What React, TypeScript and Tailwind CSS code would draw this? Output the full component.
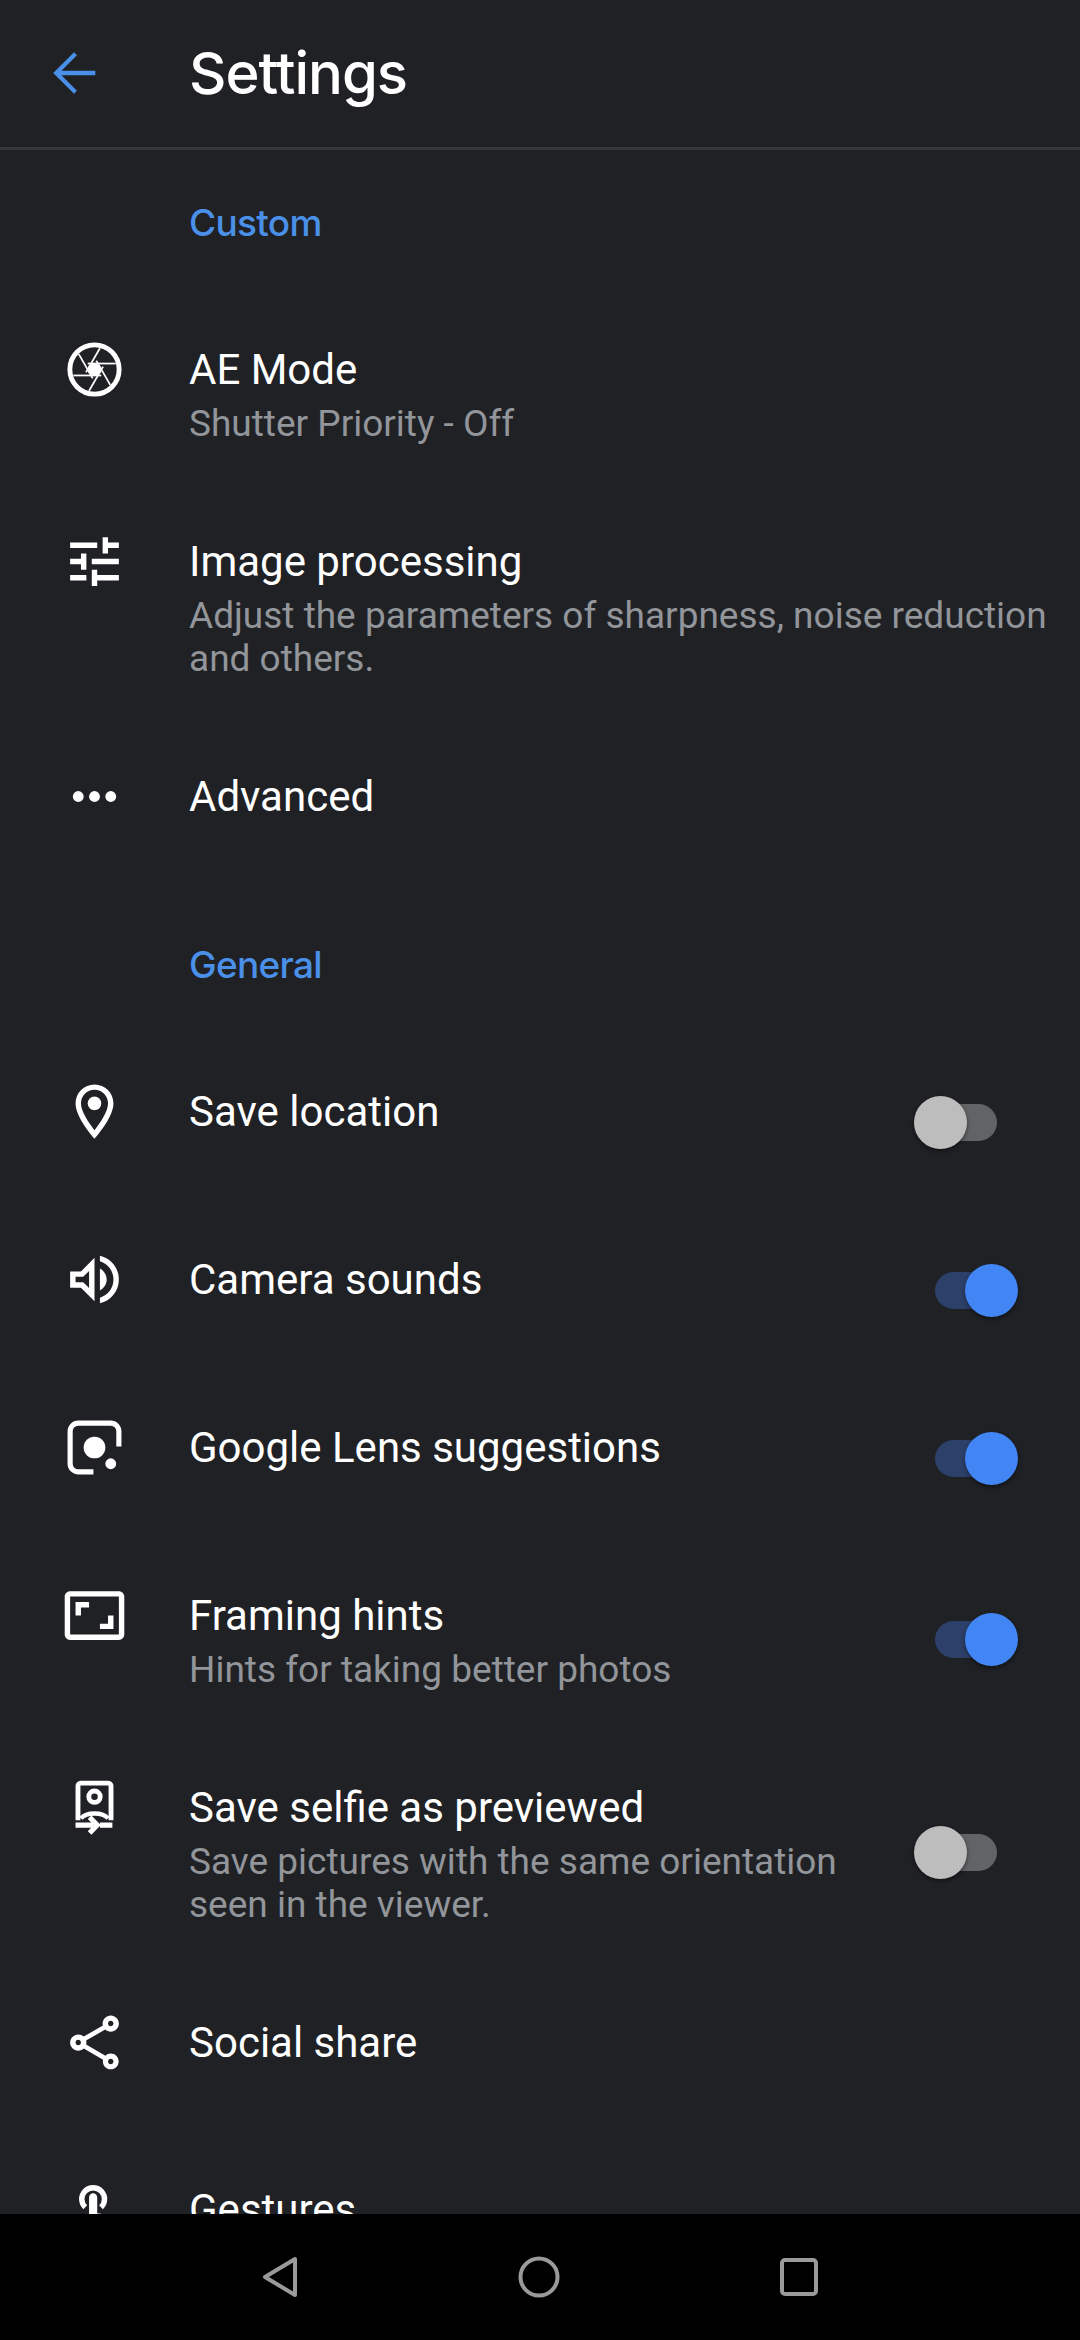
import type { ReactNode } from 'react'

function Toggle({ on }: { on: boolean }) {
  return (
    <div className={`relative h-[37px] w-[62px] rounded-full ${on ? 'bg-[#2c4069]' : 'bg-[#626365]'}`}>
      <div
        className={`absolute top-[-8px] h-[53px] w-[53px] rounded-full shadow-[0_2px_4px_rgba(0,0,0,0.45)] ${
          on ? 'right-[-21px] bg-[#4285f4]' : 'left-[-21px] bg-[#bdbdbd]'
        }`}
      />
    </div>
  )
}

function Icon({ children }: { children: ReactNode }) {
  return (
    <svg width={65} height={65} viewBox="0 0 24 24" fill="white">
      {children}
    </svg>
  )
}

function SectionTitle({ children, className }: { children: string; className: string }) {
  return (
    <div className={`pl-[189px] font-['Inter',sans-serif] text-[37px] font-medium leading-[44px] tracking-[-0.7px] text-[#4a90e8] ${className}`}>
      {children}
    </div>
  )
}

type RowProps = {
  icon: ReactNode
  title: string
  lines?: string[]
  toggle?: boolean
  className: string
}

function Row({ icon, title, lines, toggle, className }: RowProps) {
  return (
    <div className={`flex min-h-[74px] items-start ${className}`}>
      <div className="mt-[-6px] w-[189px] shrink-0 pl-[62px]">{icon}</div>
      <div className="mb-[-2px] min-w-0 flex-1 pt-[2px]">
        <div className="text-[42px] leading-[50px] text-white">{title}</div>
        {lines && (
          <div className="mt-[7px] text-[37px] leading-[43px] text-[#92959a]">
            {lines.map((l) => (
              <div key={l} className="whitespace-nowrap">{l}</div>
            ))}
          </div>
        )}
      </div>
      {toggle !== undefined && (
        <div className="mr-[83px] self-center">
          <Toggle on={toggle} />
        </div>
      )}
    </div>
  )
}

const Aperture = (
  <Icon>
    <circle cx="12" cy="12" r="9.1" fill="none" stroke="white" strokeWidth="1.8" />
    {/* six shutter blades, same edge turned around the centre */}
    {[0, 60, 120, 180, 240, 300].map((deg) => (
      <path key={deg} d="M9.5 9.8H19.8" stroke="white" strokeWidth="0.65" transform={`rotate(${deg} 12 12)`} />
    ))}
    <path d="M12 9.5 14.2 10.75V13.25L12 14.5 9.8 13.25V10.75Z" />
  </Icon>
)

export default function App() {
  return (
    <div className="flex h-[2340px] w-[1080px] flex-col overflow-hidden bg-[#202125] font-['Roboto',sans-serif]">
      <header className="flex h-[150px] shrink-0 items-start border-b-[3px] border-[#36373a]">
        <div className="w-[189px] pl-[42px] pt-[41px]">
          <svg width={64} height={64} viewBox="0 0 24 24" fill="#4a90e8">
            <path d="M20 11.15H7.3l5.8-5.8L12 4.2 4.2 12l7.8 7.8 1.1-1.15-5.8-5.8H20z" />
          </svg>
        </div>
        <h1 className="pt-[41px] font-['Inter',sans-serif] text-[58px] font-medium leading-[64px] tracking-[-1px] text-white">
          Settings
        </h1>
      </header>
      <main className="min-h-0 flex-1 overflow-hidden">
        <SectionTitle className="mt-[51px]">Custom</SectionTitle>
        <Row className="mt-[98px]" icon={Aperture} title="AE Mode" lines={['Shutter Priority - Off']} />
        <Row
          className="mt-[92px]"
          icon={
            <Icon>
              <path d="M3 17v2h6v-2H3zM3 5v2h10V5H3zm10 16v-2h8v-2h-8v-2h-2v6h2zM7 9v2H3v2h4v2h2V9H7zm14 4v-2H11v2h10zm-6-4h2V7h4V5h-4V3h-2v6z" />
            </Icon>
          }
          title="Image processing"
          lines={['Adjust the parameters of sharpness, noise reduction', 'and others.']}
        />
        <Row
          className="mt-[92px]"
          icon={
            <Icon>
              <circle cx="6" cy="12" r="2" />
              <circle cx="12" cy="12" r="2" />
              <circle cx="18" cy="12" r="2" />
            </Icon>
          }
          title="Advanced"
        />
        <SectionTitle className="mt-[99px]">General</SectionTitle>
        <Row
          className="mt-[98px]"
          icon={
            <Icon>
              <path d="M12 2C8.13 2 5 5.13 5 9c0 5.25 7 13 7 13s7-7.75 7-13c0-3.87-3.13-7-7-7zM7 9c0-2.76 2.24-5 5-5s5 2.24 5 5c0 2.88-2.88 7.19-5 9.88C9.92 16.21 7 11.85 7 9z" />
              <circle cx="12" cy="9" r="2.5" />
            </Icon>
          }
          title="Save location"
          toggle={false}
        />
        <Row
          className="mt-[94px]"
          icon={
            <Icon>
              <path d="M3 9v6h4l5 5V4L7 9H3zm7-.17v6.34L7.83 13H5v-2h2.83L10 8.83zM16.5 12c0-1.77-1.02-3.29-2.5-4.03v8.05c1.48-.73 2.5-2.25 2.5-4.02zM14 3.23v2.06c2.89.86 5 3.54 5 6.71s-2.11 5.85-5 6.71v2.06c4.01-.91 7-4.49 7-8.77 0-4.28-2.99-7.86-7-8.77z" />
            </Icon>
          }
          title="Camera sounds"
          toggle
        />
        <Row
          className="mt-[94px]"
          icon={
            <Icon>
              <path d="M21 11.6V6a3 3 0 0 0-3-3H6a3 3 0 0 0-3 3v12a3 3 0 0 0 3 3h5.6" fill="none" stroke="white" strokeWidth="1.9" />
              <circle cx="12" cy="12" r="4" />
              <circle cx="18" cy="18" r="2" />
            </Icon>
          }
          title="Google Lens suggestions"
          toggle
        />
        <Row
          className="mt-[94px]"
          icon={
            <Icon>
              <path d="M19 12h-2v3h-3v2h5v-5zM7 9h3V7H5v5h2V9zm14-6H3c-1.1 0-2 .9-2 2v14c0 1.1.9 2 2 2h18c1.1 0 2-.9 2-2V5c0-1.1-.9-2-2-2zm0 16.01H3V4.99h18v14.02z" />
            </Icon>
          }
          title="Framing hints"
          lines={['Hints for taking better photos']}
          toggle
        />
        <Row
          className="mt-[92px]"
          icon={
            <Icon>
              <g fill="none" stroke="white">
                <path d="M5.9 16.7V4a1 1 0 0 1 1-1h10.2a1 1 0 0 1 1 1v12.7" strokeWidth="1.8" />
                <circle cx="12" cy="8" r="2.1" strokeWidth="1.8" />
                <path d="M7 16c2-2.4 8-2.4 10 0" strokeWidth="1.6" />
                <path d="M5 18.5h6.5M14 18.5h4.6" strokeWidth="1.9" />
                <path d="M10.2 15.6 13 18.5l-2.8 2.9" strokeWidth="1.9" />
              </g>
            </Icon>
          }
          title="Save selfie as previewed"
          lines={['Save pictures with the same orientation', 'seen in the viewer.']}
          toggle={false}
        />
        <Row
          className="mt-[92px]"
          icon={
            <Icon>
              <path d="M18 16.08c-.76 0-1.44.3-1.96.77L8.91 12.7c.05-.23.09-.46.09-.7s-.04-.47-.09-.7l7.05-4.11c.54.5 1.25.81 2.04.81 1.66 0 3-1.34 3-3s-1.34-3-3-3-3 1.34-3 3c0 .24.04.47.09.7L8.04 9.81C7.5 9.31 6.79 9 6 9c-1.66 0-3 1.34-3 3s1.34 3 3 3c.79 0 1.5-.31 2.04-.81l7.12 4.16c-.05.21-.08.43-.08.65 0 1.61 1.31 2.92 2.92 2.92s2.92-1.31 2.92-2.92-1.31-2.92-2.92-2.92zM18 4c.55 0 1 .45 1 1s-.45 1-1 1-1-.45-1-1 .45-1 1-1zM6 13c-.55 0-1-.45-1-1s.45-1 1-1 1 .45 1 1-.45 1-1 1zm12 7.02c-.55 0-1-.45-1-1s.45-1 1-1 1 .45 1 1-.45 1-1 1z" />
            </Icon>
          }
          title="Social share"
        />
        <Row
          className="mt-[93px]"
          icon={
            <Icon>
              <path d="M8.6 11.2A4.2 4.2 0 1 1 14.4 11.2" fill="none" stroke="white" strokeWidth="2" />
              <path d="M18.84 15.87l-4.54-2.26c-.17-.07-.35-.11-.54-.11H13v-6c0-.83-.67-1.5-1.5-1.5S10 6.67 10 7.5v10.74c-3.6-.76-3.54-.75-3.67-.75-.31 0-.59.13-.79.33l-.79.8 4.94 4.94c.27.27.65.44 1.06.44h6.79c.75 0 1.33-.55 1.44-1.28l.75-4.57c.01-.07.02-.14.02-.2 0-.62-.38-1.16-.91-1.45z" />
            </Icon>
          }
          title="Gestures"
        />
      </main>
      <nav className="flex h-[126px] shrink-0 items-center justify-between bg-black px-[262px]">
        <svg width={36} height={42} viewBox="0 0 36 42" fill="none" stroke="#9a9a9a" strokeWidth="4" strokeLinejoin="round">
          <path d="M33 3v36L3 21z" />
        </svg>
        <svg width={42} height={42} viewBox="0 0 42 42" fill="none" stroke="#9a9a9a" strokeWidth="4">
          <circle cx="21" cy="21" r="18.5" />
        </svg>
        <svg width={38} height={38} viewBox="0 0 38 38" fill="none" stroke="#9a9a9a" strokeWidth="4">
          <rect x="2" y="2" width="34" height="34" rx="3" />
        </svg>
      </nav>
    </div>
  )
}
